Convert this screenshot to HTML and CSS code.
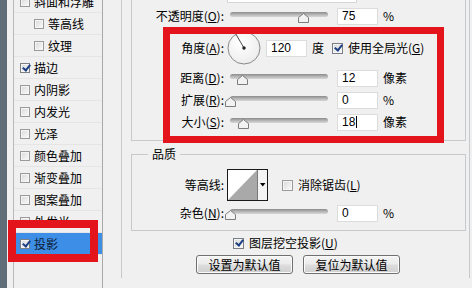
FILE: index.html
```html
<!DOCTYPE html>
<html>
<head>
<meta charset="utf-8">
<link rel="stylesheet" href="styles.css">
</head>
<body>
<div class="dialog">
  <div class="edge"></div>
  <div class="list">
    <div class="items">
      <div class="item"><span class="cb"></span><span class="itxt">斜面和浮雕</span></div>
      <div class="item sub"><span class="cb"></span><span class="itxt">等高线</span></div>
      <div class="item sub"><span class="cb"></span><span class="itxt">纹理</span></div>
      <div class="item"><span class="cb on"></span><span class="itxt">描边</span></div>
      <div class="item"><span class="cb"></span><span class="itxt">内阴影</span></div>
      <div class="item"><span class="cb"></span><span class="itxt">内发光</span></div>
      <div class="item"><span class="cb"></span><span class="itxt">光泽</span></div>
      <div class="item"><span class="cb"></span><span class="itxt">颜色叠加</span></div>
      <div class="item"><span class="cb"></span><span class="itxt">渐变叠加</span></div>
      <div class="item"><span class="cb"></span><span class="itxt">图案叠加</span></div>
      <div class="item"><span class="cb"></span><span class="itxt">外发光</span></div>
      <div class="item sel"><span class="cb on"></span><span class="itxt">投影</span></div>
    </div>
  </div>
  <div class="main">
    <div class="outer">
      <div class="group struct">
        <div class="blend"><div class="dropdown"></div></div>
        <div class="row r-opacity">
          <span class="lbl">不透明度(<u>O</u>):</span>
          <div class="slider"><div class="track"></div><svg class="thumb" style="left:68px" width="11" height="10" viewBox="0 0 11 10"><path d="M5.5 0.5 L10.5 4.5 V9.5 H0.5 V4.5 Z" fill="#f2f2f2" stroke="#7c7c7c"/></svg></div>
          <div class="input">75</div><span class="unit">%</span>
        </div>
        <div class="row r-angle">
          <span class="lbl">角度(<u>A</u>):</span>
          <svg class="dial" width="34" height="34" viewBox="0 0 34 34"><defs><radialGradient id="dg" cx="0.4" cy="0.35" r="0.7"><stop offset="0" stop-color="#ffffff"/><stop offset="1" stop-color="#ececec"/></radialGradient></defs><circle cx="17" cy="17" r="16" fill="url(#dg)" stroke="#8a8a8a"/><line x1="17" y1="17" x2="9" y2="3.3" stroke="#4a4a4a" stroke-width="1"/><circle cx="17" cy="17" r="1.7" fill="#222"/></svg>
          <div class="input in-angle">120</div><span class="unit">度</span>
          <span class="cb on gl"></span><span class="cbtxt">使用全局光(<u>G</u>)</span>
        </div>
        <div class="row r-dist">
          <span class="lbl">距离(<u>D</u>):</span>
          <div class="slider"><div class="track"></div><svg class="thumb" style="left:7px" width="11" height="10" viewBox="0 0 11 10"><path d="M5.5 0.5 L10.5 4.5 V9.5 H0.5 V4.5 Z" fill="#f2f2f2" stroke="#7c7c7c"/></svg></div>
          <div class="input">12</div><span class="unit">像素</span>
        </div>
        <div class="row r-spread">
          <span class="lbl">扩展(<u>R</u>):</span>
          <div class="slider"><div class="track"></div><svg class="thumb" style="left:-5px" width="11" height="10" viewBox="0 0 11 10"><path d="M5.5 0.5 L10.5 4.5 V9.5 H0.5 V4.5 Z" fill="#f2f2f2" stroke="#7c7c7c"/></svg></div>
          <div class="input">0</div><span class="unit">%</span>
        </div>
        <div class="row r-size">
          <span class="lbl">大小(<u>S</u>):</span>
          <div class="slider"><div class="track"></div><svg class="thumb" style="left:8px" width="11" height="10" viewBox="0 0 11 10"><path d="M5.5 0.5 L10.5 4.5 V9.5 H0.5 V4.5 Z" fill="#f2f2f2" stroke="#7c7c7c"/></svg></div>
          <div class="input">18<span class="caret"></span></div><span class="unit">像素</span>
        </div>
      </div>

      <div class="group quality">
        <div class="legend">品质</div>
        <div class="row r-contour">
          <span class="lbl">等高线:</span>
          <svg class="contour" width="41" height="32" viewBox="0 0 41 32"><rect x="0.5" y="0.5" width="40" height="31" fill="#f4f4f4" stroke="#1a1a1a"/><rect x="1" y="1" width="29" height="30" fill="#ffffff"/><polygon points="1,31 30,1 30,31" fill="#a9a9a9"/><line x1="30.5" y1="1" x2="30.5" y2="31" stroke="#7a7a7a"/><polygon points="33,14 38.5,14 35.75,17.5" fill="#000"/></svg>
          <span class="cb aa"></span><span class="cbtxt">消除锯齿(<u>L</u>)</span>
        </div>
        <div class="row r-noise">
          <span class="lbl">杂色(<u>N</u>):</span>
          <div class="slider"><div class="track"></div><svg class="thumb" style="left:-5px" width="11" height="10" viewBox="0 0 11 10"><path d="M5.5 0.5 L10.5 4.5 V9.5 H0.5 V4.5 Z" fill="#f2f2f2" stroke="#7c7c7c"/></svg></div>
          <div class="input">0</div><span class="unit">%</span>
        </div>
      </div>

      <div class="row r-knock">
        <span class="cb on"></span><span class="cbtxt">图层挖空投影(<u>U</u>)</span>
      </div>
      <div class="btns">
        <div class="btn">设置为默认值</div>
        <div class="btn">复位为默认值</div>
      </div>
    </div>
  </div>

  <div class="mark mark-a"></div>
  <div class="mark mark-b"></div>
</div>
</body>
</html>
```

FILE: styles.css
```css
* { box-sizing: border-box; }
html, body { margin: 0; padding: 0; }
body {
  background: #f0f0f0;
  font-family: "Noto Sans CJK SC", "Noto Sans", sans-serif;
  font-size: 12px;
  line-height: 16px;
  color: #000;
}
u { text-decoration: underline; text-underline-offset: 1px; }

.dialog {
  position: relative;
  width: 472px;
  height: 288px;
  overflow: hidden;
  display: flex;
  background: #f0f0f0;
}
.edge { width: 7px; flex: none; background: #5f6d79; }

/* style list */
.list {
  flex: none;
  width: 90px;
  margin-left: 6px;
  border-left: 1px solid #b9b9b9;
  border-right: 1px solid #a9a9a9;
  background: #f0f0f0;
  overflow: hidden;
}
.items { margin-top: -9px; }
.item {
  height: 22px;
  display: flex;
  align-items: center;
  padding-left: 6px;
  border-bottom: 1px solid #e5e5e5;
  white-space: nowrap;
}
.item.sub { padding-left: 20px; }
.item .cb { width: 10px; height: 10px; }
.itxt { margin-left: 4px; }
.item.sel { background: #3c8ee6; color: #0d1b33; }

/* checkbox */
.cb {
  position: relative;
  flex: none;
  display: inline-block;
  width: 11px;
  height: 11px;
  border: 1px solid #9a9a9a;
  background: linear-gradient(135deg, #d9d9d9, #fbfbfb);
  box-shadow: inset 0 0 0 1px #f5f5f5;
}
.cb.on { border-color: #7a7f86; }
.cb.on::after {
  content: "";
  position: absolute;
  left: 2.5px;
  top: -0.5px;
  width: 3px;
  height: 6px;
  border: solid #1d3f84;
  border-width: 0 2px 2px 0;
  transform: rotate(38deg);
}
.cbtxt { margin-left: 5px; white-space: nowrap; }

/* right side */
.main { flex: 1; padding-left: 18px; padding-right: 2px; }
.outer {
  height: 100%;
  border-left: 1px solid #c6cacd;
  border-right: 1px solid #c6cacd;
  padding-left: 9px;
  padding-right: 3px;
}
.group { border: 1px solid #c6cacd; }
.struct { margin-top: -10px; padding-bottom: 8px; }
.blend { height: 12px; }
.dropdown {
  margin-left: 95px;
  width: 130px;
  height: 12px;
  background: #fff;
  border: 1px solid #d6d6d6;
  border-top: none;
}

.row { display: flex; align-items: center; white-space: nowrap; }
.r-opacity { margin-top: 3px; height: 20px; }
.r-angle { margin-top: 5px; height: 34px; }
.r-dist { margin-top: 3px; height: 20px; }
.r-spread { margin-top: 2px; height: 20px; }
.r-size { margin-top: 2px; height: 20px; }

.lbl { flex: none; width: 92px; text-align: right; }

.slider { position: relative; flex: none; width: 98px; height: 20px; margin-left: 6px; }
.track {
  margin-top: 6px;
  height: 5px;
  border-radius: 3px;
  background: linear-gradient(#8b8b8b, #bdbdbd 60%, #d6d6d6);
}
.thumb { position: absolute; top: 7px; display: block; }

.input {
  flex: none;
  width: 41px;
  height: 17px;
  margin-left: 9px;
  background: #fff;
  border: 1px solid #dcdcdc;
  padding-left: 4px;
  font-family: "Liberation Sans", Arial, sans-serif;
  font-size: 12px;
  line-height: 15px;
  display: flex;
  align-items: center;
}
.caret { display: inline-block; width: 1px; height: 12px; background: #000; margin-left: 1px; }
.unit { margin-left: 5px; }

.dial { flex: none; margin-left: 3px; display: block; }
.in-angle { margin-left: 5px; }
.cb.gl { margin-left: 8px; }

/* quality */
.quality { margin-top: 13px; padding-bottom: 8px; }
.legend {
  display: table;
  margin: -9px 0 0 16px;
  padding: 0 4px;
  background: #f0f0f0;
  line-height: 16px;
}
.r-contour { margin-top: 7px; height: 32px; }
.contour { flex: none; margin-left: 3px; display: block; }
.cb.aa { margin-left: 14px; }
.r-noise { margin-top: 3px; height: 18px; }

.r-knock { margin-top: 4px; height: 16px; padding-left: 102px; }

.btns { margin-top: 4px; display: flex; gap: 10px; padding-left: 65px; }
.btn {
  width: 97px;
  height: 19px;
  border: 1px solid #707070;
  border-radius: 3px;
  background: linear-gradient(#f4f4f4 0%, #ebebeb 48%, #dddddd 52%, #cfcfcf 100%);
  box-shadow: inset 0 0 0 1px #fbfbfb;
  text-align: center;
  line-height: 17px;
  white-space: nowrap;
}

/* red annotation boxes */
.mark { position: absolute; border: 7px solid #e3141b; }
.mark-a { left: 163px; top: 27px; width: 281px; height: 116px; }
.mark-b { left: 8px; top: 220px; width: 90px; height: 42px; border-width: 8px; }
```
